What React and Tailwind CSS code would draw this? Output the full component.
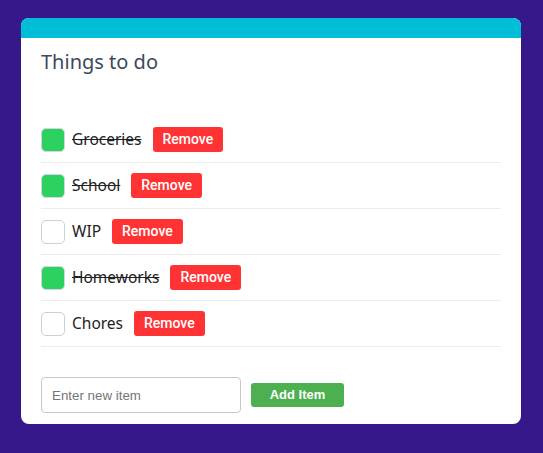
import React, { useState } from 'react';

const initialItems = [
  { id: 1, text: 'Groceries', done: true },
  { id: 2, text: 'School', done: true },
  { id: 3, text: 'WIP', done: false },
  { id: 4, text: 'Homeworks', done: true },
  { id: 5, text: 'Chores', done: false },
];

const TodoRow = ({ item, onToggle, onRemove }) => (
  <li className="flex items-center h-[46px] border-b border-[#ececec]">
    <button
      onClick={onToggle}
      className={
        item.done
          ? 'w-6 h-6 rounded-[5px] border border-[#d0d7de] bg-[#2dd160]'
          : 'w-6 h-6 rounded-[5px] border border-[#c8d0d8] bg-white'
      }
    />
    <span
      className={
        item.done
          ? 'ml-[7px] text-[15.5px] text-[#222] line-through'
          : 'ml-[7px] text-[15.5px] text-[#222]'
      }
    >
      {item.text}
    </span>
    <button
      onClick={onRemove}
      className="ml-[11px] h-[25px] px-[10px] rounded-[3px] bg-[#ff3333] text-white text-[14px] font-medium font-['Roboto',sans-serif]"
    >
      Remove
    </button>
  </li>
);

export default function App() {
  const [items, setItems] = useState(initialItems);
  const [value, setValue] = useState('');

  const add = () => {
    if (!value.trim()) return;
    setItems([...items, { id: Date.now(), text: value.trim(), done: false }]);
    setValue('');
  };

  return (
    <div className="min-h-[453px] bg-[#35198a] pt-[18px] pl-[21px] font-['Noto_Sans',sans-serif]">
      <div className="w-[500px] bg-white rounded-[8px] overflow-hidden">
        <div className="h-[20px] bg-[#00bed8]" />
        <div className="px-5 pt-[10px] pb-[11px]">
          <h1 className="text-[20px] leading-[28px] text-[#3b4a5c]">Things to do</h1>

          <ul className="mt-[41px]">
            {items.map((item) => (
              <TodoRow
                key={item.id}
                item={item}
                onToggle={() => setItems(items.map((i) => (i.id === item.id ? { ...i, done: !i.done } : i)))}
                onRemove={() => setItems(items.filter((i) => i.id !== item.id))}
              />
            ))}
          </ul>

          {/* new item */}
          <div className="mt-[30px] flex items-center gap-[10px] font-['Liberation_Sans',sans-serif]">
            <input
              value={value}
              onChange={(e) => setValue(e.target.value)}
              placeholder="Enter new item"
              className="w-[200px] h-[36px] px-[10px] border border-[#c8c8c8] rounded-[4px] text-[13.33px] placeholder:text-[#757575] outline-none"
            />
            <button
              onClick={add}
              className="w-[93px] h-[24px] rounded-[3px] bg-[#4caf50] text-white text-[13px] font-bold"
            >
              Add Item
            </button>
          </div>
        </div>
      </div>
    </div>
  );
}
